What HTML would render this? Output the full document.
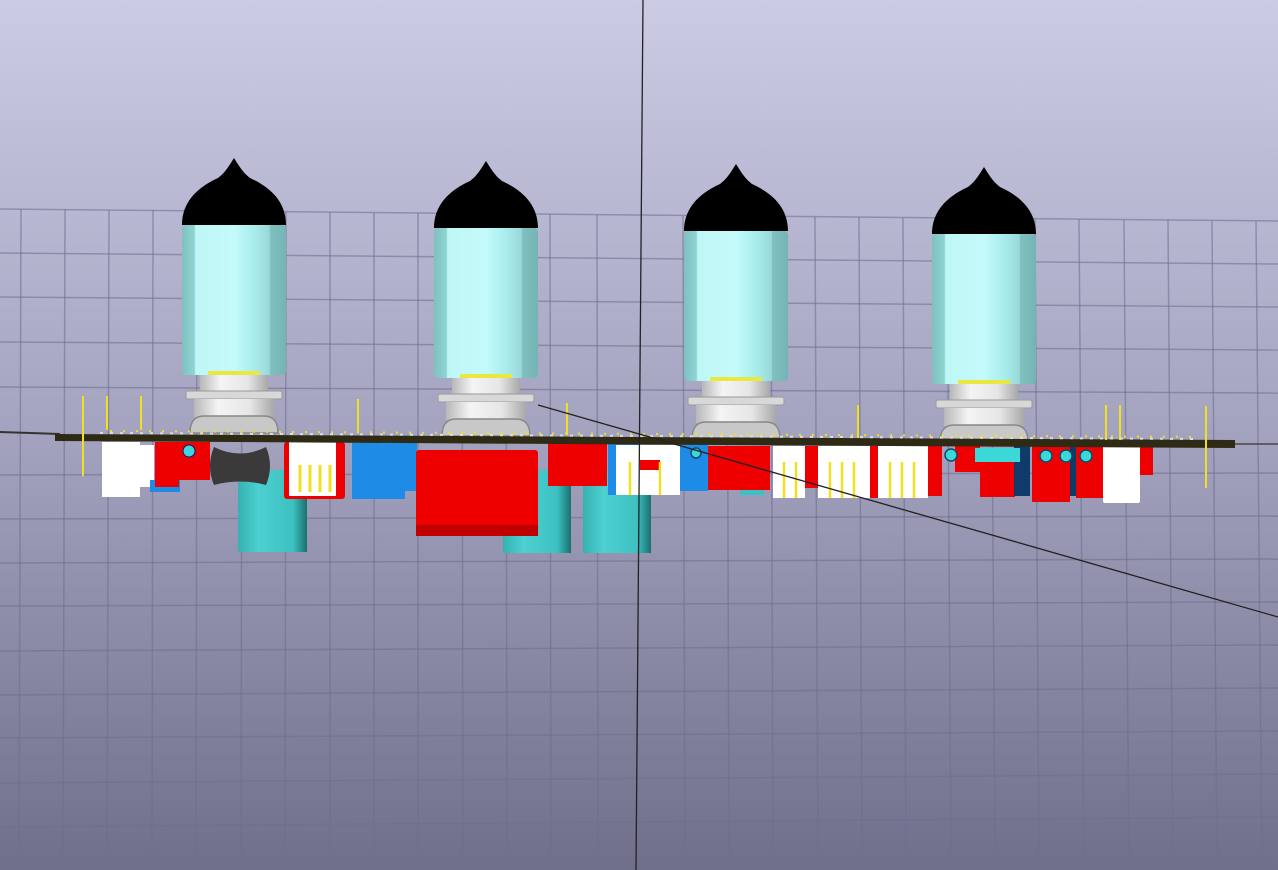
<!DOCTYPE html>
<html><head><meta charset="utf-8"><style>
html,body{margin:0;padding:0;width:1278px;height:870px;overflow:hidden}
svg{display:block}
</style></head><body>
<svg width="1278" height="870" viewBox="0 0 1278 870" xmlns="http://www.w3.org/2000/svg">
<defs>
<linearGradient id="bg" x1="0" y1="0" x2="0" y2="1">
<stop offset="0" stop-color="#cbcbe4"/><stop offset="0.5" stop-color="#a3a3bf"/><stop offset="1" stop-color="#6f6f8c"/>
</linearGradient>
<linearGradient id="glass" x1="0" x2="1">
<stop offset="0" stop-color="#7fc0c0"/><stop offset="0.12" stop-color="#8fd4d4"/><stop offset="0.13" stop-color="#bff6f6"/><stop offset="0.5" stop-color="#c4fafa"/><stop offset="0.7" stop-color="#a8ecec"/><stop offset="0.84" stop-color="#9ad8d8"/><stop offset="0.85" stop-color="#80c0c0"/><stop offset="1" stop-color="#74b4b4"/>
</linearGradient>
<linearGradient id="silver" x1="0" x2="1">
<stop offset="0" stop-color="#b8b8b8"/><stop offset="0.3" stop-color="#f4f4f4"/><stop offset="0.7" stop-color="#e6e6e6"/><stop offset="1" stop-color="#a8a8a8"/>
</linearGradient>
<linearGradient id="teal" x1="0" x2="1">
<stop offset="0" stop-color="#38b0b0"/><stop offset="0.3" stop-color="#4cd0d0"/><stop offset="0.8" stop-color="#3cc0c0"/><stop offset="1" stop-color="#1a6f6f"/>
</linearGradient>
<g id="tube">
<path d="M-52,67 C-52,45 -38,30 -16,20 C-8,14 -4,6 0,0 C4,6 8,14 16,20 C38,30 52,45 52,67 Z" fill="#000"/>
<rect x="-52" y="67" width="104" height="150" rx="4" fill="url(#glass)"/>
<rect x="-34" y="217" width="68" height="18" fill="url(#silver)"/>
<rect x="-48" y="233" width="96" height="8" rx="2" fill="#d8d8d8" stroke="#999" stroke-width="1"/>
<rect x="-40" y="241" width="80" height="18" fill="url(#silver)"/>
<path d="M-44,275 C-44,262 -38,258 -30,258 L30,258 C38,258 44,262 44,275 Z" fill="#c8c8c8" stroke="#888" stroke-width="1.5"/>
<rect x="-26" y="213" width="52" height="4" fill="#e8e840"/>
</g>
</defs>
<rect width="1278" height="870" fill="url(#bg)"/>
<g stroke="#6e6e8e" stroke-width="1.5" opacity="0.55">
<line x1="0" y1="209" x2="1278" y2="221"/>
<line x1="0" y1="253" x2="1278" y2="264"/>
<line x1="0" y1="297" x2="1278" y2="307"/>
<line x1="0" y1="342" x2="1278" y2="350"/>
<line x1="0" y1="387" x2="1278" y2="393"/>
<line x1="0" y1="475" x2="1278" y2="473"/>
<line x1="0" y1="519" x2="1278" y2="516"/>
<line x1="0" y1="563" x2="1278" y2="559"/>
<line x1="0" y1="606" x2="1278" y2="602"/>
<line x1="0" y1="651" x2="1278" y2="645"/>
<line x1="0" y1="695" x2="1278" y2="688"/>
<line x1="0" y1="738" x2="1278" y2="731"/>
<line x1="0" y1="783" x2="1278" y2="774"/>
<line x1="0" y1="827" x2="1278" y2="817"/>
</g>
<g stroke="#6e6e8e" stroke-width="1.5" opacity="0.55">
<line x1="21" y1="209" x2="19" y2="870"/><line x1="65" y1="209" x2="63" y2="870"/><line x1="109" y1="210" x2="107" y2="870"/>
<line x1="153" y1="210" x2="152" y2="870"/><line x1="197" y1="211" x2="196" y2="870"/><line x1="242" y1="211" x2="241" y2="870"/>
<line x1="286" y1="212" x2="285" y2="870"/><line x1="330" y1="212" x2="330" y2="870"/><line x1="374" y1="213" x2="374" y2="870"/>
<line x1="418" y1="213" x2="418" y2="870"/><line x1="462" y1="214" x2="463" y2="870"/><line x1="506" y1="214" x2="507" y2="870"/>
<line x1="550" y1="214" x2="551" y2="870"/><line x1="597" y1="215" x2="598" y2="870"/><line x1="683" y1="216" x2="685" y2="870"/>
<line x1="727" y1="216" x2="729" y2="870"/><line x1="771" y1="217" x2="773" y2="870"/><line x1="815" y1="217" x2="818" y2="870"/>
<line x1="859" y1="217" x2="862" y2="870"/><line x1="903" y1="218" x2="906" y2="870"/><line x1="947" y1="218" x2="951" y2="870"/>
<line x1="991" y1="219" x2="995" y2="870"/><line x1="1035" y1="219" x2="1039" y2="870"/><line x1="1079" y1="219" x2="1084" y2="870"/>
<line x1="1124" y1="220" x2="1129" y2="870"/><line x1="1168" y1="220" x2="1173" y2="870"/><line x1="1212" y1="221" x2="1217" y2="870"/>
<line x1="1256" y1="221" x2="1262" y2="870"/>
</g>
<use href="#tube" x="234" y="158"/>
<use href="#tube" x="486" y="161"/>
<use href="#tube" x="736" y="164"/>
<use href="#tube" x="984" y="167"/>
<rect x="238" y="470" width="69" height="82" fill="url(#teal)"/>
<rect x="503" y="470" width="68" height="83" fill="url(#teal)"/>
<rect x="583" y="470" width="68" height="83" fill="url(#teal)"/>
<rect x="740" y="470" width="24" height="25" fill="#3cc0c0"/>
<rect x="102" y="442" width="38" height="55" fill="#fff"/>
<rect x="140" y="445" width="14" height="42" fill="#fff"/>
<rect x="150" y="480" width="30" height="12" fill="#1e8ce6"/>
<rect x="155" y="442" width="24" height="45" fill="#ee0000"/>
<rect x="179" y="442" width="31" height="38" fill="#ee0000"/>
<circle cx="189" cy="451" r="6" fill="#3cd8d8" stroke="#117" stroke-width="1"/>
<path d="M214,447 Q240,460 266,447 Q274,466 266,485 Q240,478 214,485 Q206,466 214,447Z" fill="#3a3a3a"/>
<rect x="284" y="442" width="61" height="57" rx="3" fill="#ee0000"/>
<rect x="289" y="442" width="47" height="54" fill="#fff"/>
<g stroke="#f0e020" stroke-width="3"><line x1="300" y1="465" x2="300" y2="492"/><line x1="310" y1="465" x2="310" y2="492"/><line x1="320" y1="465" x2="320" y2="492"/><line x1="330" y1="465" x2="330" y2="492"/></g>
<rect x="352" y="443" width="53" height="56" fill="#1e8ce6"/>
<rect x="405" y="443" width="12" height="48" fill="#1e8ce6"/>
<rect x="416" y="450" width="122" height="86" rx="3" fill="#ee0000"/>
<rect x="416" y="525" width="122" height="11" fill="#c00000"/>
<rect x="548" y="443" width="59" height="43" fill="#ee0000"/>
<rect x="608" y="443" width="32" height="52" fill="#1e8ce6"/>
<rect x="616" y="445" width="64" height="50" fill="#fff"/>
<rect x="640" y="460" width="20" height="10" fill="#ee0000"/>
<g stroke="#f0e020" stroke-width="2.5"><line x1="630" y1="462" x2="630" y2="495"/><line x1="660" y1="462" x2="660" y2="495"/></g>
<rect x="680" y="443" width="28" height="48" fill="#1e8ce6"/>
<rect x="708" y="446" width="62" height="44" fill="#ee0000"/>
<rect x="773" y="446" width="32" height="52" fill="#fff"/>
<g stroke="#f0e020" stroke-width="2.5"><line x1="784" y1="462" x2="784" y2="498"/><line x1="796" y1="462" x2="796" y2="498"/></g>
<rect x="805" y="446" width="14" height="42" fill="#ee0000"/>
<rect x="818" y="446" width="52" height="52" fill="#fff"/>
<g stroke="#f0e020" stroke-width="2.5"><line x1="830" y1="462" x2="830" y2="498"/><line x1="842" y1="462" x2="842" y2="498"/><line x1="854" y1="462" x2="854" y2="498"/></g>
<rect x="870" y="446" width="8" height="52" fill="#ee0000"/>
<rect x="878" y="446" width="50" height="52" fill="#fff"/>
<g stroke="#f0e020" stroke-width="2.5"><line x1="890" y1="462" x2="890" y2="498"/><line x1="902" y1="462" x2="902" y2="498"/><line x1="914" y1="462" x2="914" y2="498"/></g>
<rect x="928" y="446" width="14" height="50" fill="#ee0000"/>
<rect x="955" y="446" width="25" height="26" fill="#ee0000"/>
<rect x="980" y="455" width="35" height="42" fill="#ee0000"/>
<rect x="1014" y="446" width="16" height="50" fill="#103a6a"/>
<rect x="975" y="448" width="45" height="14" fill="#3cd8d8"/>
<rect x="1032" y="446" width="38" height="56" fill="#ee0000"/>
<rect x="1070" y="446" width="6" height="50" fill="#103a6a"/>
<rect x="1076" y="446" width="28" height="52" fill="#ee0000"/>
<rect x="1103" y="446" width="37" height="57" rx="2" fill="#fff"/>
<rect x="1140" y="446" width="13" height="29" fill="#ee0000"/>
<g fill="#3cd8d8" stroke="#0b4a6a" stroke-width="1.5">
<circle cx="951" cy="455" r="6"/><circle cx="1046" cy="456" r="6"/><circle cx="1066" cy="456" r="6"/><circle cx="1086" cy="456" r="6"/><circle cx="696" cy="453" r="5"/>
</g>
<line x1="0" y1="432" x2="60" y2="434" stroke="#333" stroke-width="2"/>
<polygon points="55,434 1235,440 1235,448 55,441" fill="#2e2a14"/>
<line x1="1235" y1="444" x2="1278" y2="444" stroke="#444" stroke-width="1.5"/>
<g stroke="#f0e020" stroke-width="2">
<line x1="83" y1="396" x2="83" y2="476"/><line x1="107" y1="396" x2="107" y2="430"/><line x1="141" y1="396" x2="141" y2="430"/>
<line x1="358" y1="399" x2="358" y2="432"/><line x1="567" y1="403" x2="567" y2="435"/><line x1="858" y1="405" x2="858" y2="438"/>
<line x1="1106" y1="405" x2="1106" y2="440"/><line x1="1120" y1="405" x2="1120" y2="440"/><line x1="1206" y1="406" x2="1206" y2="488"/>
</g>
<g stroke="#ddd" stroke-width="2" stroke-dasharray="3 7">
<line x1="100" y1="433" x2="1200" y2="439"/>
</g>
<g stroke="#f0e020" stroke-width="2" stroke-dasharray="2 11">
<line x1="110" y1="431" x2="1200" y2="437"/>
</g>
<line x1="643" y1="0" x2="636" y2="870" stroke="#222" stroke-width="1.3"/>
<line x1="538" y1="405" x2="1278" y2="617" stroke="#222" stroke-width="1.3"/>
</svg>
</body></html>
